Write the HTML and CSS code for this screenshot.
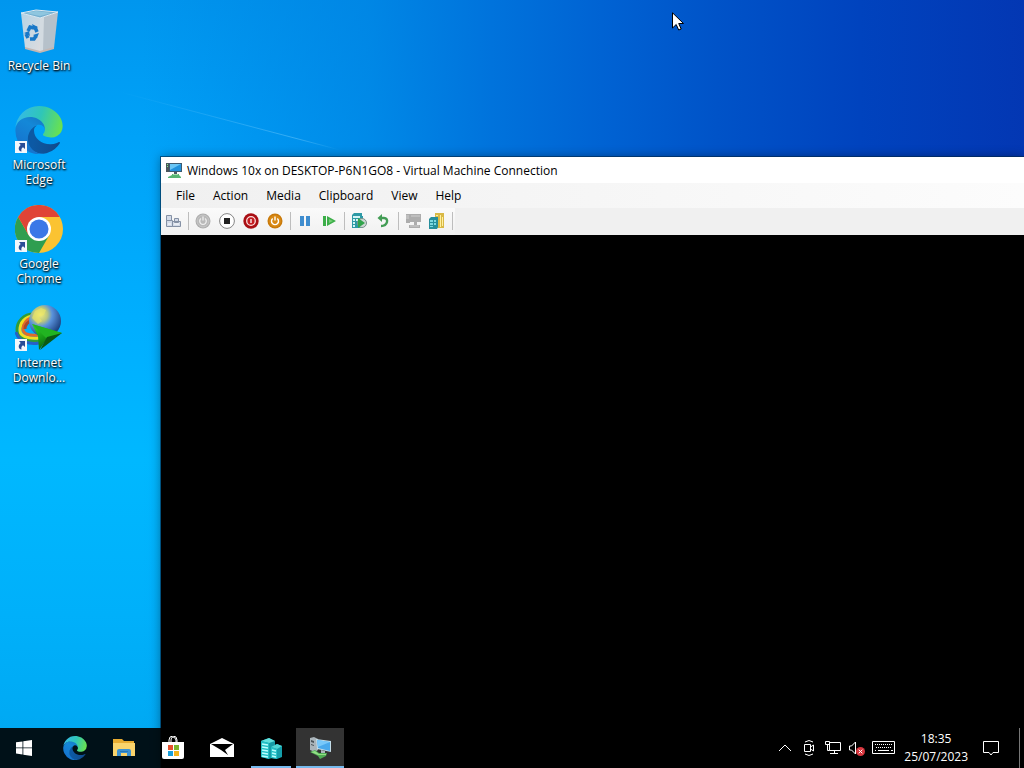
FILE: index.html
```html
<!DOCTYPE html>
<html lang="en">
<head>
  <meta charset="utf-8">
  <title>Desktop</title>
  <link rel="stylesheet" href="styles.css">
</head>
<body>
  <!-- shared icons -->
  <svg class="defs" width="0" height="0" aria-hidden="true">
    <defs>
      <linearGradient id="edgeDark" x1="0.2" y1="0.5" x2="1" y2="0.6">
        <stop offset="0" stop-color="#0c59a4"/>
        <stop offset="1" stop-color="#114a8b"/>
      </linearGradient>
      <linearGradient id="edgeBlue" x1="0.8" y1="0" x2="0.3" y2="1">
        <stop offset="0" stop-color="#1478c4"/>
        <stop offset="0.3" stop-color="#1488d8"/>
        <stop offset="1" stop-color="#1670cc"/>
      </linearGradient>
      <linearGradient id="edgeGreen" x1="0" y1="0.4" x2="1" y2="0.6">
        <stop offset="0" stop-color="#35b9e8"/>
        <stop offset="0.5" stop-color="#2fc6b8"/>
        <stop offset="1" stop-color="#6be24c"/>
      </linearGradient>
      <linearGradient id="ray" x1="0" y1="0" x2="1" y2="0">
        <stop offset="0" stop-color="#6cc8fb" stop-opacity="0"/>
        <stop offset="0.8" stop-color="#6cc8fb" stop-opacity="0.5"/>
        <stop offset="1" stop-color="#6cc8fb" stop-opacity="0"/>
      </linearGradient>
      <linearGradient id="binSide" x1="0" y1="0" x2="1" y2="1">
        <stop offset="0" stop-color="#b4d3e6"/>
        <stop offset="1" stop-color="#dddcde"/>
      </linearGradient>
      <radialGradient id="globe" cx="0.35" cy="0.3" r="0.75">
        <stop offset="0" stop-color="#f3ee7a"/>
        <stop offset="0.3" stop-color="#b9c67e"/>
        <stop offset="0.5" stop-color="#5a93dc"/>
        <stop offset="1" stop-color="#163a78"/>
      </radialGradient>
      <linearGradient id="arrowGreen" x1="0" y1="0" x2="0.6" y2="1">
        <stop offset="0" stop-color="#3ad32e"/>
        <stop offset="0.5" stop-color="#18a018"/>
        <stop offset="1" stop-color="#0b4a10"/>
      </linearGradient>
      <symbol id="edge" viewBox="0 0 256 260">
        <path fill="url(#edgeDark)" d="M235.68 195.46a93.73 93.73 0 0 1-10.54 4.71 101.87 101.87 0 0 1-35.9 6.46c-47.32 0-88.54-32.55-88.54-74.32A31.48 31.48 0 0 1 117.13 105c-42.8 1.8-53.8 46.4-53.8 72.53 0 73.88 68.09 81.37 82.76 81.37 7.91 0 19.84-2.3 27-4.56l1.31-.44a128.34 128.34 0 0 0 66.6-52.8 4 4 0 0 0-5.32-5.64z"/>
        <path fill="url(#edgeBlue)" d="M105.73 246.6A79.2 79.2 0 0 1 83 225.3a80.72 80.72 0 0 1 29.53-120c3.12-1.47 8.45-4.13 15.54-4a32.35 32.35 0 0 1 25.69 13 31.88 31.88 0 0 1 6.36 18.66c0-.21 24.46-79.6-80-79.6-43.9 0-80 41.66-80 78.21a130.15 130.15 0 0 0 12.11 56 128 128 0 0 0 156.38 67.11 75.55 75.55 0 0 1-62.78-8z"/>
        <path fill="url(#edgeGreen)" d="M152.33 148.86c-.81 1.05-3.3 2.5-3.3 5.66 0 2.61 1.7 5.12 4.72 7.23 14.38 10 41.49 8.68 41.56 8.68a59.56 59.56 0 0 0 30.27-8.35 61.38 61.38 0 0 0 30.43-52.88c.26-22.41-8-37.31-11.34-43.91C223.51 23.87 177.72 0 128 0A128 128 0 0 0 0 126.2c.48-36.54 36.8-66.05 80-66.05 3.5 0 23.46.34 42 10.07 16.34 8.58 24.9 18.94 30.85 29.21 6.18 10.67 7.28 24.15 7.28 29.52s-2.74 13.33-7.8 19.91z"/>
      </symbol>
      <symbol id="shortcut" viewBox="0 0 12 12">
        <rect width="12" height="12" fill="#f4f7fb"/>
        <path d="M4 2h6v6L8 6.300C6.500 7.300 6 8.500 6.500 10.500 3.500 10 2.500 6.500 5.700 4z" fill="#2a4d96"/>
      </symbol>
      <symbol id="vm" viewBox="0 0 16 16">
        <path d="M0 1h4v9H0z" fill="#4d565c"/>
        <path d="M1 2h1v1H1zM1 4h1v1H1z" fill="#7ff08c"/>
        <path d="M3 1h13v9H3z" fill="#3c5a70"/>
        <path d="M4 2h11v7H4z" fill="#2292dc"/>
        <path d="M4 2h11L4 8z" fill="#6ac6f5"/>
        <path d="M8 10h3v2H8z" fill="#4b5a66"/>
        <path d="M6 12h7v1l2 2v1H2v-1l4-2z" fill="#56b573"/>
        <path d="M7 12h5v1H7z" fill="#a3dcaa"/>
      </symbol>
    </defs>
  </svg>

  <main class="desktop">
    <svg class="light-ray" viewBox="0 0 220 60" aria-hidden="true"><path d="M0 0L220 58" stroke="url(#ray)" stroke-width="1"/></svg>

    <nav class="shortcuts">
      <button class="shortcut">
        <svg viewBox="0 0 48 48" aria-hidden="true">
          <path d="M6 6l19 5v34l-15-4z" fill="url(#binSide)"/>
          <path d="M25 11l18-6-4 36-14 4z" fill="#b6c1ca"/>
          <path d="M25 11l4-1-1 34-3 1z" fill="#d3dbe1"/>
          <path d="M6 6l15-3 22 2-18 6z" fill="#74afd0" stroke="#dce9f1"/>
          <path d="M10 6l11-2 16 2-12 3z" fill="#8fc6df"/>
          <path d="M10 40l15 4v2l-15-4zM25 44l14-4v2l-14 4z" fill="#c4b7b2"/>
          <g fill="none" stroke="#1878c8" stroke-width="3.500">
            <path d="M13 24l2-4 4 1M20 20l2 5M21 29l-2 3h-4M13 31l-2-4"/>
          </g>
          <path d="M17 17l6 3-4 3zM24 26l-2 5-4-3zM9 26l5-2 1 5z" fill="#1878c8"/>
        </svg>
        <span>Recycle Bin</span>
      </button>
      <button class="shortcut">
        <svg viewBox="0 0 48 48" aria-hidden="true">
          <use href="#edge" width="48" height="48"/>
          <use href="#shortcut" y="35" width="12" height="12"/>
        </svg>
        <span>Microsoft<br>Edge</span>
      </button>
      <button class="shortcut">
        <svg viewBox="0 0 48 48" aria-hidden="true">
          <circle cx="24" cy="24" r="24" fill="#fbc332"/>
          <path d="M24 24L3.200 12A24 24 0 0 1 44.800 12H24z" fill="#e04436"/>
          <path d="M3.200 12A24 24 0 0 0 24 48L34.400 30 24 24 13.600 30z" fill="#2f9e50"/>
          <path d="M3.200 12L13.600 30 24 12z" fill="#e04436"/>
          <circle cx="24" cy="24" r="12" fill="#fff"/>
          <circle cx="24" cy="24" r="9.500" fill="#3b78e7"/>
          <use href="#shortcut" y="35" width="12" height="12"/>
        </svg>
        <span>Google<br>Chrome</span>
      </button>
      <button class="shortcut">
        <svg viewBox="0 0 48 48" aria-hidden="true">
          <g fill="none" stroke-width="3">
            <path d="M19 10C8 10 2 18 2 26c0 8 7 11 22 11" stroke="#2f9c38"/>
            <path d="M19 12C10 12 5 19 5 26c0 6 7 9 19 8" stroke="#f2dd20"/>
            <path d="M18 14C12 14 8 20 8 25c0 5 6 7 16 6" stroke="#e06a2a"/>
            <path d="M17 17C13 17 10 21 10 25" stroke="#a8482c"/>
            <path d="M1 28c2 9 13 13 23 11" stroke="#2861c6"/>
          </g>
          <circle cx="30" cy="17" r="16" fill="url(#globe)"/>
          <path d="M20 7l6-3 5 2-2 5-5 2 3 4-4 3-6-6z" fill="#eee763" opacity=".6"/>
          <path d="M17 20l30 9-15 6-8 11-1-14z" fill="url(#arrowGreen)"/>
          <path d="M17 20l30 9-15 6z" fill="#21b421"/>
          <path d="M32 33l15-4-22 17z" fill="#0b5a12"/>
          <use href="#shortcut" y="35" width="12" height="12"/>
        </svg>
        <span>Internet<br>Downlo...</span>
      </button>
    </nav>

    <section class="window">
      <header class="title-bar">
        <svg viewBox="0 0 16 16" aria-hidden="true"><use href="#vm"/></svg>
        <span>Windows 10x on DESKTOP-P6N1GO8 - Virtual Machine Connection</span>
      </header>
      <nav class="menu-bar">
        <button>File</button>
        <button>Action</button>
        <button>Media</button>
        <button>Clipboard</button>
        <button>View</button>
        <button>Help</button>
      </nav>
      <div class="tool-bar">
        <div class="tools">
          <button aria-label="Ctrl+Alt+Delete">
            <svg viewBox="0 0 16 16"><path d="M1.500 2.500h5v5h-5zM1.500 7.500h6v6h-6zM9.500 5.500h4v4h-4zM7.500 8.500h8v5h-8z" fill="#d3dbe8" stroke="#8591a5"/><path d="M3 11h3M9 11h5" stroke="#fff"/></svg>
          </button>
          <i></i>
          <button aria-label="Start" disabled>
            <svg viewBox="0 0 16 16"><circle cx="8" cy="8" r="7.500" fill="#adadad"/><circle cx="8" cy="8" r="6" fill="#b9b9b9" stroke="#c8c8c8"/><path d="M6 5.500a3.300 3.300 0 1 0 4 0M8 3.500v4" fill="none" stroke="#eee" stroke-width="1.300"/></svg>
          </button>
          <button aria-label="Turn Off">
            <svg viewBox="0 0 16 16"><circle cx="8" cy="8" r="7.400" fill="#fff" stroke="#858585"/><path d="M5 5h6v6H5z" fill="#222"/></svg>
          </button>
          <button aria-label="Shut Down">
            <svg viewBox="0 0 16 16"><circle cx="8" cy="8" r="7.700" fill="#a90f14"/><circle cx="8" cy="8" r="4.300" fill="#c41c20" stroke="#fbe0df" stroke-width="1.300"/><path d="M8 6v4" stroke="#fff" stroke-width="1.300"/></svg>
          </button>
          <button aria-label="Save">
            <svg viewBox="0 0 16 16"><circle cx="8" cy="8" r="7.500" fill="#c97a0b"/><circle cx="8" cy="8" r="6" fill="#d98a16"/><path d="M5.700 5.500a3.500 3.500 0 1 0 4.600 0M8 3.500v4" fill="none" stroke="#fff" stroke-width="1.400"/></svg>
          </button>
          <i></i>
          <button aria-label="Pause">
            <svg viewBox="0 0 16 16"><path d="M3 3h4v10H3zM9 3h4v10H9z" fill="#3f8dcf"/></svg>
          </button>
          <button aria-label="Reset">
            <svg viewBox="0 0 16 16"><path d="M2 3h3v10H2zM6 3l9 5-9 5z" fill="#3cae49"/><path d="M8 6l4 2-4 2z" fill="#75ce75"/></svg>
          </button>
          <i></i>
          <button aria-label="Checkpoint">
            <svg viewBox="0 0 16 16"><path d="M1 2l2-2h8v3h1v11l-2 1H1z" fill="#2e9aa6"/><path d="M2 3h7v2H2zM2 6h2v2H2zM5 6h2v2H5zM2 9h2v2H2zM2 12h2v2H2z" fill="#d5f5f6"/><circle cx="11" cy="10" r="4.500" fill="#ced7d4" stroke="#78908a"/><path d="M7 5l7 5-7 5z" fill="#31a44b"/></svg>
          </button>
          <button aria-label="Revert">
            <svg viewBox="0 0 16 16"><path d="M5 5h4c5 0 4 8-3 8" fill="none" stroke="#439d55" stroke-width="2.400"/><path d="M2.500 5L7 1v8z" fill="#439d55"/></svg>
          </button>
          <i></i>
          <button aria-label="Basic Session" disabled>
            <svg viewBox="0 0 16 16"><path d="M1 1h4v9H1zM5 1h11v8H5zM9 9h3v3H9zM4 12h11v3H4z" fill="#adadad"/><path d="M1 3h3M1 5h3M6 3h9M5 13h9" stroke="#cfcfcf"/></svg>
          </button>
          <button aria-label="Enhanced Session">
            <svg viewBox="0 0 16 16"><path d="M6 0h9v15H6z" fill="#d9b945"/><path d="M7 2h2v1H7zM11 2h1v12h-1zM13 4h1v9h-1z" fill="#fff0a1"/><path d="M0 6l2-2h7v10l-1 2H0z" fill="#268e9c"/><path d="M1 7h3v2H1zM5 7h2v2H5zM1 10h3v2H1zM5 10h2v2H5zM1 13h3v1H1z" fill="#7dd8e1"/></svg>
          </button>
          <i></i>
        </div>
      </div>
      <div class="vm-screen"></div>
    </section>

    <svg class="cursor" viewBox="0 0 12 19" aria-hidden="true"><path d="M.5.800V16l3.700-3.500L6.700 18l2.500-1-2.500-5.500h4.800z" fill="#fff" stroke="#000"/></svg>
  </main>

  <footer class="taskbar">
    <button class="task start" aria-label="Start">
      <svg viewBox="0 0 16 16"><path d="M0 2.300l6.500-.9v6.100H0zM7.300 1.300L16 0v7.500H7.300zM0 8.300h6.500v6.200L0 13.600zM7.300 8.300H16V16l-8.700-1.300z" fill="#fff"/></svg>
    </button>
    <button class="task" aria-label="Microsoft Edge">
      <svg class="large" viewBox="0 0 24 24"><use href="#edge" width="24" height="24"/></svg>
    </button>
    <button class="task" aria-label="File Explorer">
      <svg class="large" viewBox="0 0 24 24"><path d="M1 3h9l2 2h10v15H1z" fill="#e8ac31"/><path d="M1 7h22v13H1z" fill="#fad46c"/><path d="M5 20v-5q0-2 2-2h10q2 0 2 2v5h-4v-3H9v3z" fill="#3d92d2"/><path d="M8 15h8v1H8z" fill="#2477b7"/></svg>
    </button>
    <button class="task" aria-label="Microsoft Store">
      <svg class="large" viewBox="0 0 24 24"><path d="M8 7V4q0-4 4-4t4 4v3M10 7V4q0-3 2-3t3 3v3" fill="none" stroke="#fff"/><path d="M1 6h22v15q0 2-2 2H3q-2 0-2-2z" fill="#fff"/><path d="M7 9h5v5H7z" fill="#e5502d"/><path d="M13 9h5v5h-5z" fill="#7cb62c"/><path d="M7 15h5v5H7z" fill="#199fda"/><path d="M13 15h5v5h-5z" fill="#f4b41a"/></svg>
    </button>
    <button class="task" aria-label="Mail">
      <svg class="large" viewBox="0 0 24 24"><path d="M0 8l12-6 12 6v13H0z" fill="#fff"/><path d="M1 8h22l-8 6 3 5-7-5z" fill="#000"/></svg>
    </button>
    <button class="task running" aria-label="Hyper-V Manager">
      <svg class="large" viewBox="0 0 24 24"><path d="M2 5l8-3 6 3v16l-6 2-8-2z" fill="#159ba6"/><path d="M2 5l8-3 6 3-6 2z" fill="#61e1de"/><path d="M2 5l8 2v16l-8-2z" fill="#23bfc5"/><path d="M12 11l6-3 5 2v11l-5 2-6-1z" fill="#149eaa"/><path d="M12 11l6-3 5 2-5 3z" fill="#4fd6d4"/><path d="M12 11l6 2v10l-6-1z" fill="#25c0c7"/><path d="M3 8l6 1M3 11l6 1M3 14l6 1M3 17l6 1M3 20l6 1M13 14l4 1M13 17l4 1M13 20l4 1" stroke="#b8ffff" stroke-width="1.300"/></svg>
    </button>
    <button class="task active" aria-label="Virtual Machine Connection">
      <svg class="large" viewBox="0 0 24 24"><path d="M2 2l4-1 4 2v11l-3 2-5-2z" fill="#aab4ba"/><path d="M3 4l3 1v2L3 6zM3 8l3 1v1L3 9z" fill="#4c5459"/><path d="M8 3l15 2v11L9 13z" fill="#c3dce8"/><path d="M9 4l13 2v9l-12-3z" fill="#4aa9ec"/><path d="M9 4l13 2-12 5z" fill="#78c8fa"/><path d="M13 14l4 1v3l-4-1z" fill="#a8b5bb"/><path d="M2 16l5-2 4 3h8l-1 3-6 3-2-3z" fill="#4fad54"/><path d="M3 16l4-1 4 3h7v1h-8z" fill="#94df86"/></svg>
    </button>

    <div class="tray">
      <button aria-label="Show hidden icons"><svg viewBox="0 0 16 16"><path d="M2 11l6-6 6 6" class="line"/></svg></button>
      <button aria-label="Meet Now"><svg viewBox="0 0 16 16"><path d="M3.500 4.500h6v7h-6zM9.500 7l3-2v6l-3-2M4 2q4-3 8 0M4 14q4 3 8 0" class="line"/></svg></button>
      <button aria-label="Network"><svg viewBox="0 0 16 16"><path d="M4.500 2.500h11v8h-11zM9.500 10.500v3M5 13.500h8" class="line"/><path d="M.500 1.500h4v3h-4zM2.500 4.500v6h2" class="line"/></svg></button>
      <button aria-label="Volume"><svg viewBox="0 0 16 16"><path d="M.500 6h2l4-4v12l-4-4h-2z" class="line"/><circle cx="11.500" cy="11.500" r="4.500" fill="#d9363e"/><path d="M9.700 9.700l3.600 3.600M13.300 9.700l-3.600 3.600" class="line"/></svg></button>
      <button aria-label="Touch keyboard"><svg class="keyboard" viewBox="0 0 24 16"><path d="M.500 1.500h22v12H.500z" class="line"/><path d="M3 4.500h18M4 7.500h16" class="line keys"/><path d="M3 10.500h1M6 10.500h11M19 10.500h2" class="line"/></svg></button>
      <button class="clock"><time>18:35</time><time>25/07/2023</time></button>
      <button class="notifications" aria-label="Notifications"><svg viewBox="0 0 16 16"><path d="M.500 1.500h15v11H10L8 15l-2-2.500H.500z" class="line"/></svg></button>
      <button class="show-desktop" aria-label="Show desktop"></button>
    </div>
  </footer>
</body>
</html>
```
FILE: styles.css
```css
* { box-sizing: border-box; }

body {
  margin: 0;
  height: 100vh;
  display: flex;
  flex-direction: column;
  justify-content: flex-end;
  overflow: hidden;
  position: relative;
  font-family: "Open Sans", "Noto Sans", sans-serif;
  font-size: 12px;
  background: #00b0fc;
}

button {
  margin: 0;
  padding: 0;
  border: 0;
  background: none;
  color: inherit;
  font: inherit;
}

svg { display: block; flex: none; }
.defs { position: absolute; }

/* desktop */
.desktop {
  position: absolute;
  inset: 0;
  background:
    linear-gradient(90deg, rgba(0, 128, 225, 0) 14%, rgba(0, 128, 225, 0.7) 36%, #0073dc 48%, #0061d2 60%, #0053c8 70%, #0043be 84%, #0337b3 100%),
    linear-gradient(180deg, #0096ee 0%, #00a2f8 18%, #00b0ff 45%, #00b8ff 60%, #00b0fa 80%, #00a9f3 95%);
}

.light-ray {
  position: absolute;
  left: 120px;
  top: 92px;
  width: 220px;
}

.shortcuts {
  position: relative;
  width: 78px;
  display: grid;
  grid-auto-rows: 99px;
}

.shortcut {
  display: flex;
  flex-direction: column;
  align-items: center;
  gap: 3px;
  padding-top: 7px;
  color: #fff;
  line-height: 15px;
  text-shadow: 1px 1px 2px #000, 0 1px 2px rgba(0, 0, 0, 0.8);
}

.shortcut svg { width: 48px; height: 48px; }

.cursor {
  position: absolute;
  left: 672px;
  top: 12px;
  width: 12px;
  height: 19px;
}

/* VM window */
.window {
  position: absolute;
  left: 161px;
  top: 157px;
  right: 0;
  bottom: 0;
  display: flex;
  flex-direction: column;
  background: #000;
  color: #000;
  box-shadow: 0 0 0 1px rgba(0, 40, 75, 0.6), 0 0 10px rgba(0, 0, 0, 0.4);
}

.title-bar {
  height: 26px;
  display: flex;
  align-items: center;
  gap: 5px;
  padding-left: 5px;
  background: #fff;
}

.title-bar svg { width: 16px; height: 16px; }

.menu-bar {
  height: 25px;
  display: flex;
  padding-left: 6px;
  background: linear-gradient(90deg, #f0f0f0, #fcfcfc);
}

.menu-bar button { padding: 0 9px; }

.tool-bar {
  height: 27px;
  display: flex;
  background: #f0f0f0;
}

.tools {
  display: flex;
  align-items: center;
  padding-bottom: 2px;
  background: linear-gradient(180deg, #fafafa, #f1f1f1);
}

.tools button {
  width: 24px;
  height: 24px;
  display: grid;
  place-items: center;
}

.tools svg { width: 16px; height: 16px; }

.tools i {
  width: 6px;
  height: 18px;
  background: linear-gradient(#bdbdbd, #bdbdbd) center / 1px 100% no-repeat;
}

.vm-screen { flex: 1; }

/* taskbar */
.taskbar {
  position: relative;
  height: 40px;
  display: flex;
  gap: 1px;
  background: rgba(0, 0, 0, 0.9);
  color: #fff;
}

.task {
  width: 48px;
  display: grid;
  place-items: center;
}

.start { margin-right: 2px; }
.task svg { width: 16px; height: 16px; }
.task svg.large { width: 24px; height: 24px; }

.running {
  background: linear-gradient(#76b9ed, #76b9ed) center bottom / 40px 2px no-repeat;
}

.active {
  background: #333;
  border-bottom: 2px solid #76b9ed;
  padding-top: 2px;
}

.tray {
  display: flex;
  margin-left: auto;
}

.tray button {
  min-width: 24px;
  display: grid;
  place-items: center;
}

.tray svg { width: 16px; height: 16px; }
.tray svg.keyboard { width: 24px; margin: 0 3px; }

.line {
  fill: none;
  stroke: #fff;
  stroke-width: 1;
}

.keys { stroke-dasharray: 1 1; }

.tray .clock {
  padding: 2px 0 2px 5px;
  line-height: 18px;
}

.tray .notifications { width: 46px; }

.tray .show-desktop {
  min-width: 5px;
  margin-left: 5px;
  border-left: 1px solid #777;
}
```
